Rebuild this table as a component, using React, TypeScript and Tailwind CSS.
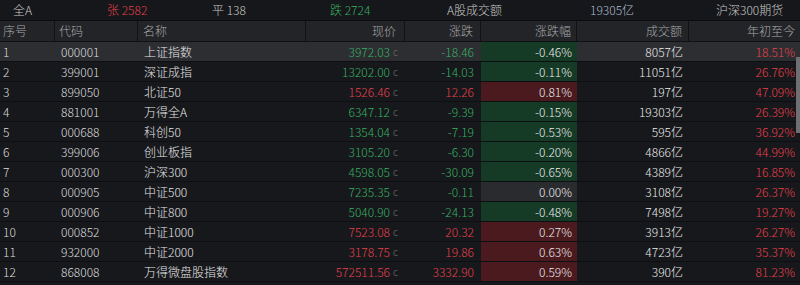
import React from "react";

type Row = {
  code: string;
  name: string;
  price: string;
  change: string;
  pct: string;
  volume: string;
  ytd: string;
};

const rows: Row[] = [
  { code: "000001", name: "上证指数", price: "3972.03", change: "-18.46", pct: "-0.46%", volume: "8057亿", ytd: "18.51%" },
  { code: "399001", name: "深证成指", price: "13202.00", change: "-14.03", pct: "-0.11%", volume: "11051亿", ytd: "26.76%" },
  { code: "899050", name: "北证50", price: "1526.46", change: "12.26", pct: "0.81%", volume: "197亿", ytd: "47.09%" },
  { code: "881001", name: "万得全A", price: "6347.12", change: "-9.39", pct: "-0.15%", volume: "19303亿", ytd: "26.39%" },
  { code: "000688", name: "科创50", price: "1354.04", change: "-7.19", pct: "-0.53%", volume: "595亿", ytd: "36.92%" },
  { code: "399006", name: "创业板指", price: "3105.20", change: "-6.30", pct: "-0.20%", volume: "4866亿", ytd: "44.99%" },
  { code: "000300", name: "沪深300", price: "4598.05", change: "-30.09", pct: "-0.65%", volume: "4389亿", ytd: "16.85%" },
  { code: "000905", name: "中证500", price: "7235.35", change: "-0.11", pct: "0.00%", volume: "3108亿", ytd: "26.37%" },
  { code: "000906", name: "中证800", price: "5040.90", change: "-24.13", pct: "-0.48%", volume: "7498亿", ytd: "19.27%" },
  { code: "000852", name: "中证1000", price: "7523.08", change: "20.32", pct: "0.27%", volume: "3913亿", ytd: "26.27%" },
  { code: "932000", name: "中证2000", price: "3178.75", change: "19.86", pct: "0.63%", volume: "4723亿", ytd: "35.37%" },
  { code: "868008", name: "万得微盘股指数", price: "572511.56", change: "3332.90", pct: "0.59%", volume: "390亿", ytd: "81.23%" },
];

const cols = "grid grid-cols-[55px_83px_168px_99px_76px_96px_112px_111px]";

const tone = (r: Row) => {
  if (r.pct === "0.00%") return { text: "text-[#36b062]", bg: "bg-[#2a2b2e]" };
  if (r.change.startsWith("-")) return { text: "text-[#36b062]", bg: "bg-[#153a25]" };
  return { text: "text-[#e5404b]", bg: "bg-[#4a1a1f]" };
};

export default function App() {
  return (
    <div
      className="w-[800px] h-[285px] overflow-hidden bg-[#17181c] text-[12px] leading-none relative"
      style={{ fontFamily: '"Noto Sans CJK SC", "Noto Sans", sans-serif' }}
    >
      {/* summary bar */}
      <div className="flex items-center h-[21px] pl-[13px] bg-[#16171a] border-b border-[#0b0c0e] text-[#c9c9c9] font-light">
        <div className="w-[94px]">全A</div>
        <div className="w-[105px] text-[#e5404b]">张 2582</div>
        <div className="w-[118px]">平 138</div>
        <div className="w-[117px] text-[#36b062]">跌 2724</div>
        <div className="w-[143px]">A股成交额</div>
        <div className="w-[126px] text-[#aebbd0]">19305亿</div>
        <div>沪深300期货</div>
      </div>

      {/* header */}
      <div className={`${cols} h-[21px] bg-[#232428] text-[#a8a8a8] font-light border-b border-[#0f1013]`}>
        <div className="flex items-center pl-[3px] border-r border-[#111215]">序号</div>
        <div className="flex items-center pl-[4px] border-r border-[#111215]">代码</div>
        <div className="flex items-center pl-[5px] border-r border-[#111215]">名称</div>
        <div className="flex items-center justify-end pr-[8px] border-r border-[#111215]">现价</div>
        <div className="flex items-center justify-end pr-[7px] border-r border-[#111215]">涨跌</div>
        <div className="flex items-center justify-end pr-[5px] border-r border-[#111215]">涨跌幅</div>
        <div className="flex items-center justify-end pr-[6px] border-r border-[#111215]">成交额</div>
        <div className="flex items-center justify-end pr-[5px]">年初至今</div>
      </div>

      {/* rows */}
      {rows.map((r, i) => {
        const t = tone(r);
        const priceUp = !r.change.startsWith("-");
        return (
          <div
            key={r.code}
            className={`${cols} h-[20px] border-b border-[#0e0f12] font-light ${i === 0 ? "bg-[#2d2e32]" : ""}`}
          >
            <div className="flex items-center pl-[3px] text-[#dcdcdc]">{i + 1}</div>
            <div className="flex items-center pl-[6px] text-[#dcdcdc]">{r.code}</div>
            <div className="flex items-center pl-[6px] text-[#e6e6e6]">{r.name}</div>
            <div className="flex items-center justify-end pr-[7px]">
              <span className={priceUp ? "text-[#e5404b]" : "text-[#36b062]"}>{r.price}</span>
              <span className="ml-[3px] text-[#707070] text-[10px]">c</span>
            </div>
            <div className={`flex items-center justify-end pr-[7px] ${t.text}`}>{r.change}</div>
            <div className={`flex items-center justify-end pr-[5px] text-[#ececec] ${t.bg}`}>{r.pct}</div>
            <div className="flex items-center justify-end pr-[6px] text-[#ececec]">{r.volume}</div>
            <div className="flex items-center justify-end pr-[5px] text-[#e5404b]">{r.ytd}</div>
          </div>
        );
      })}

      {/* scrollbar thumb */}
      <div className="absolute right-0 top-[57px] w-[4px] h-[76px] bg-[#6e6f72]" />
    </div>
  );
}
